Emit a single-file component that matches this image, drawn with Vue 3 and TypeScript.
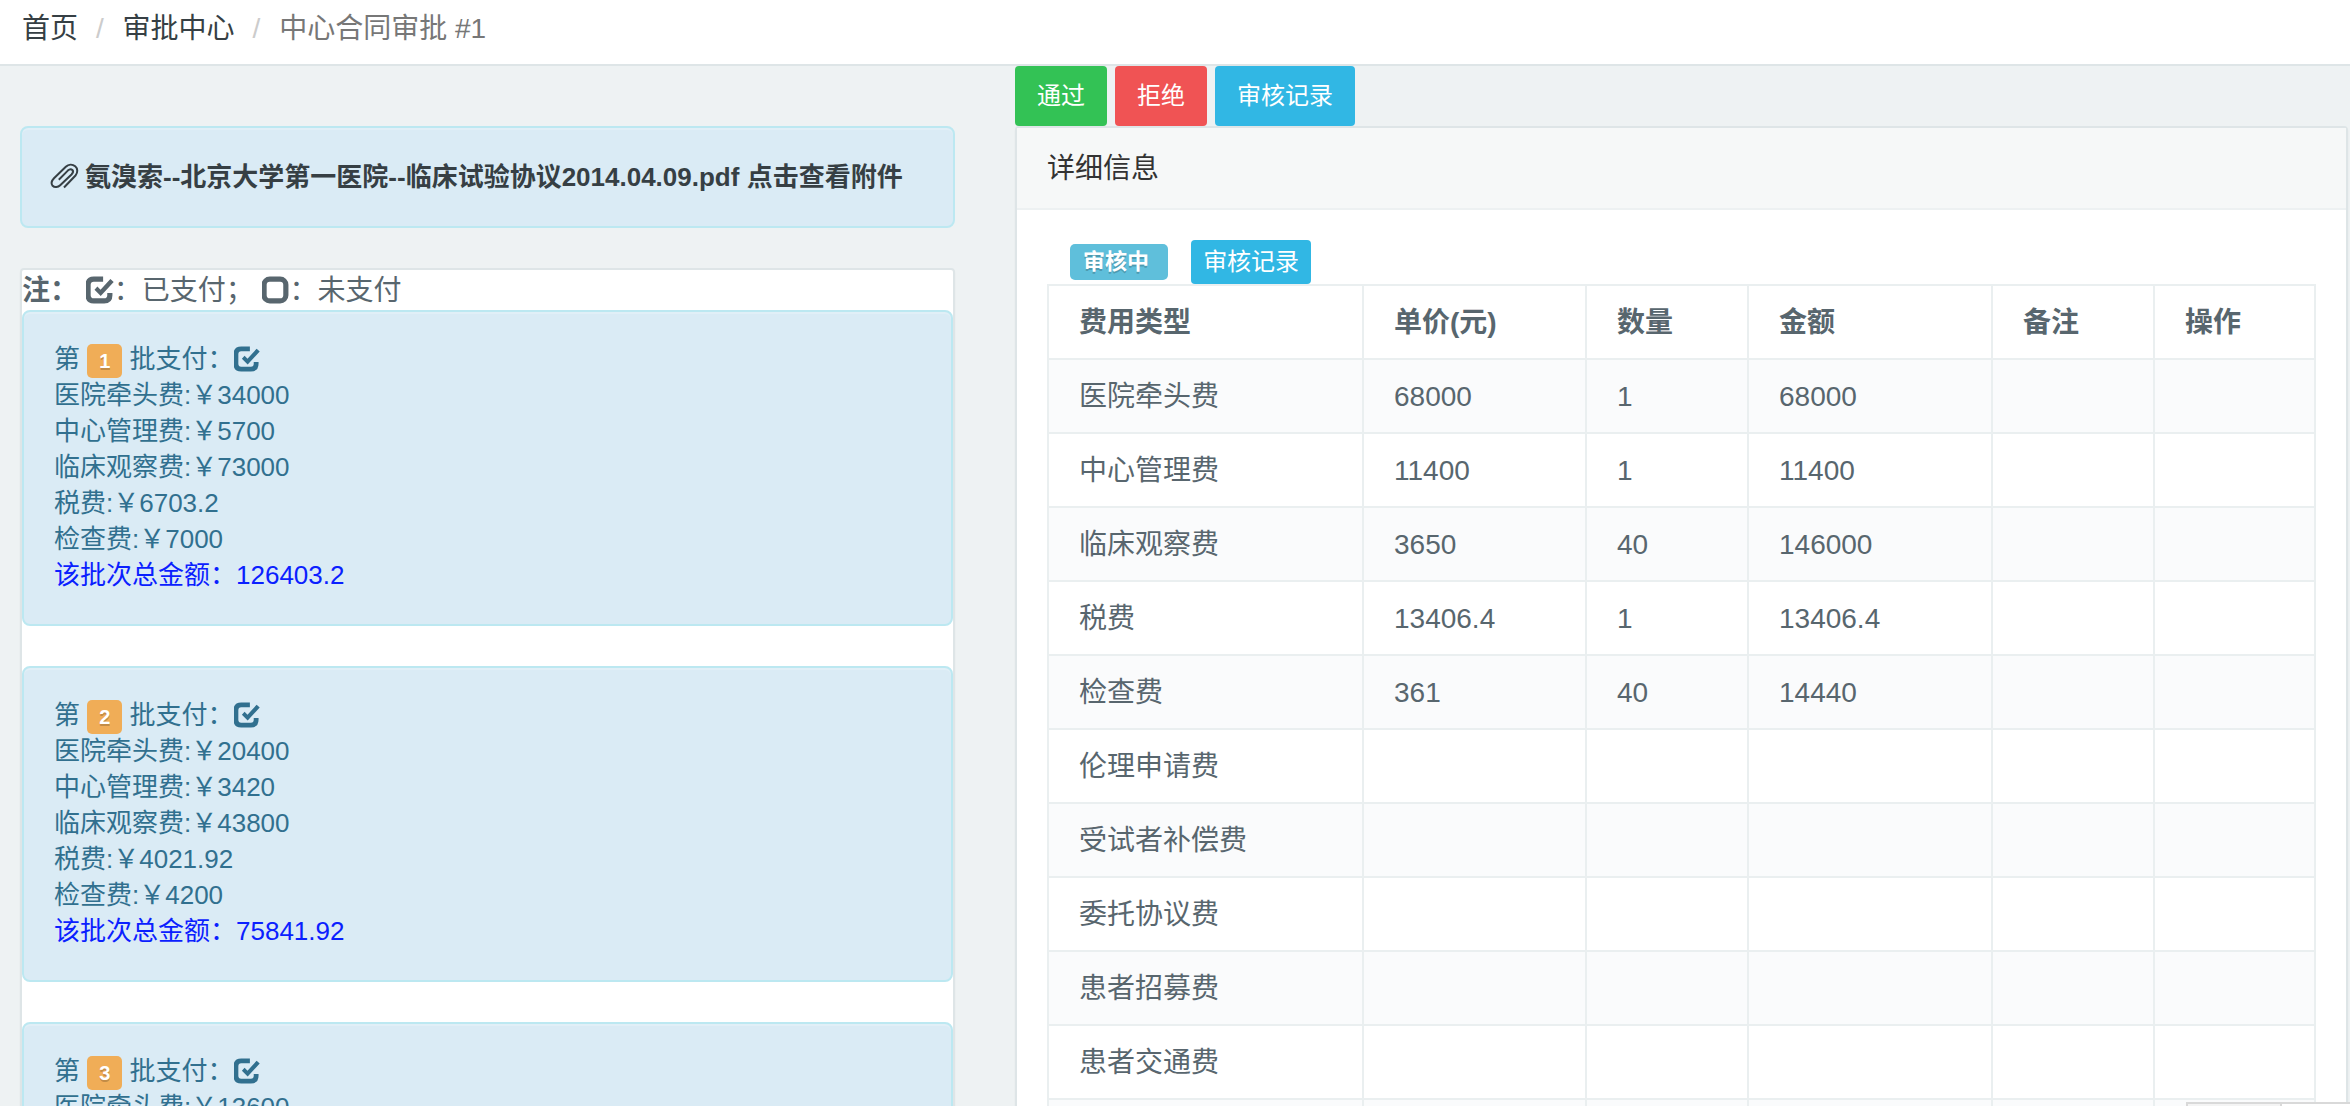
<script setup lang="ts">
interface Fee {
  name: string
  amount: string
}
interface Batch {
  no: number
  fees: Fee[]
  total?: string
}
interface Row {
  type: string
  price?: string
  count?: string
  amount?: string
}

const batches: Batch[] = [
  {
    no: 1,
    fees: [
      { name: '医院牵头费', amount: '34000' },
      { name: '中心管理费', amount: '5700' },
      { name: '临床观察费', amount: '73000' },
      { name: '税费', amount: '6703.2' },
      { name: '检查费', amount: '7000' },
    ],
    total: '126403.2',
  },
  {
    no: 2,
    fees: [
      { name: '医院牵头费', amount: '20400' },
      { name: '中心管理费', amount: '3420' },
      { name: '临床观察费', amount: '43800' },
      { name: '税费', amount: '4021.92' },
      { name: '检查费', amount: '4200' },
    ],
    total: '75841.92',
  },
  {
    no: 3,
    fees: [{ name: '医院牵头费', amount: '13600' }],
  },
]

const columns: string[] = ['费用类型', '单价(元)', '数量', '金额', '备注', '操作']

const rows: Row[] = [
  { type: '医院牵头费', price: '68000', count: '1', amount: '68000' },
  { type: '中心管理费', price: '11400', count: '1', amount: '11400' },
  { type: '临床观察费', price: '3650', count: '40', amount: '146000' },
  { type: '税费', price: '13406.4', count: '1', amount: '13406.4' },
  { type: '检查费', price: '361', count: '40', amount: '14440' },
  { type: '伦理申请费' },
  { type: '受试者补偿费' },
  { type: '委托协议费' },
  { type: '患者招募费' },
  { type: '患者交通费' },
  { type: '' },
]
</script>

<template>
  <div class="page">
    <nav class="topbar" aria-label="breadcrumb">
      <ol class="breadcrumb">
        <li><a href="#">首页</a></li>
        <li><a href="#">审批中心</a></li>
        <li class="current">中心合同审批 #1</li>
      </ol>
    </nav>

    <main class="columns">
      <section class="left">
        <div class="alert attachment">
          <a href="#">
            <svg class="icon" viewBox="2 0 28 28" aria-hidden="true">
              <path class="line" d="M14 24.500 25.500 12.500C28 9.500 27.800 5.500 25.200 3.300C22.500 1 18.500 1.200 15.800 3.800L4 15.200C1.300 18 1 20.800 2.600 22.800C4.600 24.800 8 24.300 10.200 22.200L21.500 11.500C23.300 9.700 23.500 8.200 22.400 7C21.200 5.900 19.300 6.200 17.800 7.600L8.800 16.700" />
            </svg>
            <span>氨溴索--北京大学第一医院--临床试验协议2014.04.09.pdf 点击查看附件</span>
          </a>
        </div>

        <div class="panel payments">
          <p class="legend">
            <strong>注：</strong>&nbsp;<svg class="icon" viewBox="1 0 27 27" aria-hidden="true">
              <path class="frame" d="M17.500 3H8.500Q3 3 3 8.500V18.500Q3 24 8.500 24H18.500Q24 24 24 18.500V16.500" />
              <path d="M9.200 13.200 12 10.200 15 13.200 24.500 2.800 27.700 5.700 15.200 19.300Z" />
            </svg>：已支付；&nbsp;<svg class="icon" viewBox="1 0 27 27" aria-hidden="true">
              <rect class="frame" x="3" y="3" width="21" height="21" rx="5.500" />
            </svg>：未支付
          </p>

          <div v-for="batch in batches" :key="batch.no" class="alert batch">
            <div>
              第&nbsp;<span class="badge">{{ batch.no }}</span>&nbsp;批支付：<svg class="icon" viewBox="1 0 27 27" aria-hidden="true">
                <path class="frame" d="M17.500 3H8.500Q3 3 3 8.500V18.500Q3 24 8.500 24H18.500Q24 24 24 18.500V16.500" />
                <path d="M9.200 13.200 12 10.200 15 13.200 24.500 2.800 27.700 5.700 15.200 19.300Z" />
              </svg>
            </div>
            <div v-for="fee in batch.fees" :key="fee.name">{{ fee.name }}:￥{{ fee.amount }}</div>
            <div v-if="batch.total" class="total">该批次总金额：{{ batch.total }}</div>
          </div>
        </div>
      </section>

      <section class="right">
        <div class="actions">
          <button type="button" class="btn success">通过</button>
          <button type="button" class="btn danger">拒绝</button>
          <button type="button" class="btn info">审核记录</button>
        </div>

        <div class="panel">
          <h2 class="panel-title">详细信息</h2>
          <div class="panel-body">
            <div class="status">
              <span class="label">审核中&nbsp;</span>
              <button type="button" class="btn info small">审核记录</button>
            </div>
            <table>
              <colgroup>
                <col class="c-type" />
                <col class="c-price" />
                <col class="c-count" />
                <col class="c-amount" />
                <col class="c-note" />
                <col class="c-action" />
              </colgroup>
              <thead>
                <tr>
                  <th v-for="column in columns" :key="column" scope="col">{{ column }}</th>
                </tr>
              </thead>
              <tbody>
                <tr v-for="row in rows" :key="row.type">
                  <td>{{ row.type }}</td>
                  <td>{{ row.price }}</td>
                  <td>{{ row.count }}</td>
                  <td>{{ row.amount }}</td>
                  <td></td>
                  <td></td>
                </tr>
              </tbody>
            </table>
          </div>
        </div>
      </section>
    </main>

    <div class="dock" aria-hidden="true"><span></span></div>
  </div>
</template>

<style>
body {
  margin: 0;
  background: #eef2f3;
}
</style>

<style scoped>
.page {
  height: 100vh;
  overflow: hidden;
  background: #eef2f3;
  color: #58666e;
  font-family: "Liberation Sans", "Noto Sans CJK SC", sans-serif;
  font-size: 28px;
  line-height: 40px;
}

a {
  color: #363f44;
  text-decoration: none;
}

.topbar {
  padding: 9px 22px 15px;
  background: #fff;
  border-bottom: 2px solid #dee5e7;
}

.breadcrumb {
  display: flex;
  margin: 0;
  padding: 0;
  list-style: none;
}

.breadcrumb li + li::before {
  content: "/\00a0";
  padding: 0 11px 0 18px;
  color: #ccc;
}

.current {
  color: #777;
}

.columns {
  display: grid;
  grid-template-columns: 935fr 1333fr;
  gap: 60px;
  padding: 0 2px 0 20px;
}

.left {
  padding-top: 60px;
}

.alert {
  margin-bottom: 40px;
  padding: 29px 30px 31px;
  border: 2px solid #bce8f1;
  border-radius: 8px;
  background: #daebf5;
  box-shadow: inset 0 2px 0 rgba(255, 255, 255, 0.2);
  color: #31708f;
  font-size: 26px;
  line-height: 36px;
}

.attachment {
  padding: 30px;
  line-height: 38px;
  font-weight: 700;
}

.attachment a {
  display: flex;
  align-items: center;
  gap: 5px;
  white-space: nowrap;
}

.attachment .icon {
  width: 28px;
  height: 28px;
  overflow: visible;
}

.icon {
  width: 1em;
  height: 1em;
  vertical-align: -4px;
  fill: currentColor;
}

.line {
  fill: none;
  stroke: currentColor;
  stroke-width: 2;
}

.frame {
  fill: none;
  stroke: currentColor;
  stroke-width: 5;
}

.panel {
  border: 2px solid #dee5e7;
  border-radius: 4px;
  background: #fff;
  box-shadow: 0 2px 2px rgba(0, 0, 0, 0.05);
}

.legend {
  margin: 0;
  padding-top: 2px;
  line-height: 38px;
  white-space: nowrap;
}

.badge {
  display: inline-block;
  padding: 0 12px;
  border-radius: 5px;
  background: #f0ad57;
  color: #fff;
  font-size: 20px;
  font-weight: 700;
  line-height: 34px;
  text-shadow: 0 2px 0 rgba(0, 0, 0, 0.2);
  vertical-align: middle;
}

.batch > div {
  height: 36px;
}

.total {
  color: #0a20ff;
}

.actions {
  display: flex;
  gap: 8px;
}

.btn {
  padding: 0 22px;
  border: 0;
  border-radius: 4px;
  color: #fff;
  font-family: inherit;
  font-size: 24px;
  line-height: 60px;
}

.success {
  background: #33c255;
}

.danger {
  background: #f05354;
}

.info {
  background: #31b7e4;
}

.small {
  padding: 0 12px;
  line-height: 44px;
}

.panel-title {
  margin: 0;
  padding: 21px 30px 19px;
  border-bottom: 2px solid #edf1f2;
  background: #f6f8f8;
  color: #333;
  font-size: 28px;
  font-weight: 400;
}

.panel-body {
  padding: 30px;
}

.status {
  display: flex;
  align-items: center;
  gap: 23px;
  padding-left: 23px;
}

.label {
  padding: 0 13px;
  border-radius: 5px;
  background: #5fbfdb;
  color: #fff;
  font-size: 22px;
  font-weight: 700;
  line-height: 36px;
  text-shadow: 0 2px 0 rgba(0, 0, 0, 0.2);
}

table {
  width: 100%;
  table-layout: fixed;
  border-collapse: collapse;
}

.c-type {
  width: 315px;
}

.c-price {
  width: 223px;
}

.c-count,
.c-note {
  width: 162px;
}

.c-amount {
  width: 244px;
}

.c-action {
  width: 161px;
}

th,
td {
  height: 40px;
  padding: 17px 30px 15px;
  border: 2px solid #eaeff0;
  text-align: left;
  white-space: nowrap;
}

tbody tr:nth-child(odd) {
  background: #fafbfc;
}

.dock {
  position: fixed;
  right: 0;
  bottom: 0;
  width: 162px;
  height: 2px;
  border-top: 2px solid #d9d9d9;
  border-left: 2px solid #d9d9d9;
  background: #fff;
}

.dock span {
  display: block;
  width: 92px;
  height: 2px;
  border-right: 2px solid #d9d9d9;
  background: #f4f4f4;
}
</style>
